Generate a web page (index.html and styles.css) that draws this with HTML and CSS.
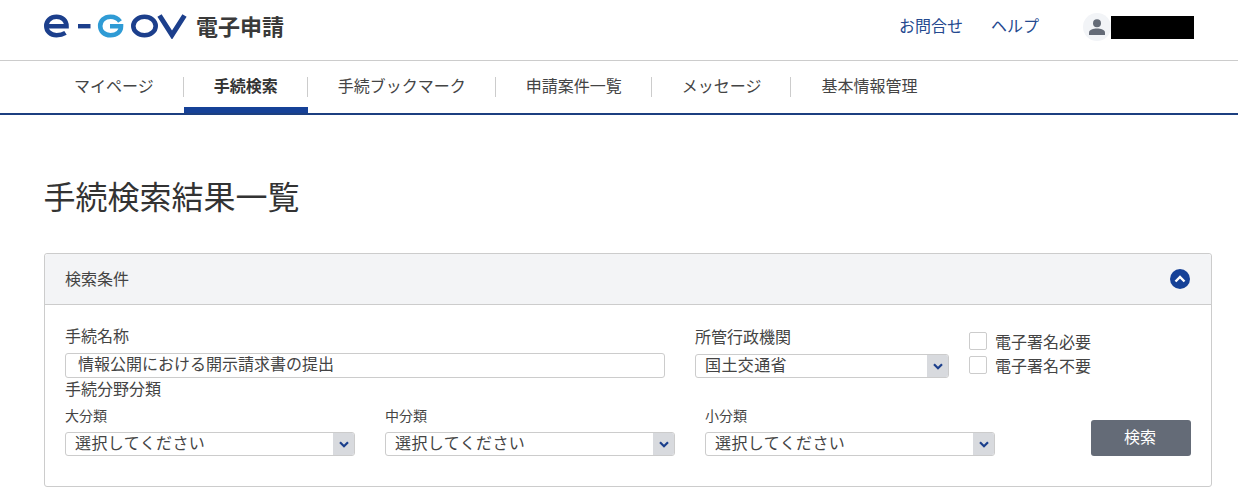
FILE: index.html
```html
<!DOCTYPE html>
<html lang="ja">
<head>
<meta charset="utf-8">
<title>手続検索結果一覧</title>
<link rel="stylesheet" href="styles.css">
</head>
<body>
<header class="topbar">
  <div class="brand">
    <svg class="logo" width="144" height="26" viewBox="0 0 144 26" aria-label="e-GOV">
      <path d="M3 13.200H22.500C22.500 7 18 3.800 12.500 3.800C6.500 3.800 2.300 7.800 2.300 13C2.300 18.200 6.500 22.200 12.500 22.200C16 22.200 19 21.400 21.500 19.900" fill="none" stroke="#1c3f8c" stroke-width="4.600"/>
      <rect x="34" y="11" width="12.500" height="4.400" fill="#1c3f8c"/>
      <path d="M76 8.500C74 5.500 70.500 3.800 66.500 3.800C60 3.800 56.200 8 56.200 13C56.200 18 60 22.200 66.500 22.200C73 22.200 77 18.500 77 13.300H66" fill="none" stroke="#2f9bd5" stroke-width="4.600"/>
      <ellipse cx="100.500" cy="13" rx="11.200" ry="9.200" fill="none" stroke="#1c3f8c" stroke-width="4.600"/>
      <path d="M115.500 2.500L128 22L140.500 2.500" fill="none" stroke="#1c3f8c" stroke-width="5"/>
    </svg>
    <span class="brand-name">電子申請</span>
  </div>
  <div class="utility">
    <a class="utility-link" href="#">お問合せ</a>
    <a class="utility-link" href="#">ヘルプ</a>
    <div class="user">
      <span class="avatar">
        <svg width="18" height="16" viewBox="0 0 18 16"><circle cx="9" cy="4.200" r="4" fill="#646b77"/><path d="M1 16V13.500C1 10.800 5.500 9.600 9 9.600C12.500 9.600 17 10.800 17 13.500V16Z" fill="#646b77"/></svg>
      </span>
      <span class="redacted"></span>
    </div>
  </div>
</header>

<nav class="mainnav">
  <a class="nav-item" href="#">マイページ</a>
  <a class="nav-item active" href="#">手続検索</a>
  <a class="nav-item" href="#">手続ブックマーク</a>
  <a class="nav-item" href="#">申請案件一覧</a>
  <a class="nav-item" href="#">メッセージ</a>
  <a class="nav-item last" href="#">基本情報管理</a>
</nav>

<main class="content">
  <h1 class="page-title">手続検索結果一覧</h1>
  <section class="card">
    <div class="card-head">
      <span class="card-title">検索条件</span>
      <span class="collapse">
        <svg width="12" height="8" viewBox="0 0 12 8"><path d="M1.500 6.500L6 2L10.500 6.500" fill="none" stroke="#fff" stroke-width="2.400"/></svg>
      </span>
    </div>
    <div class="card-body">
      <div class="row-top">
        <div class="col-name">
          <div class="label">手続名称</div>
          <div class="text-input">情報公開における開示請求書の提出</div>
        </div>
        <div class="col-agency">
          <div class="label">所管行政機関</div>
          <div class="select">
            <span class="select-value">国土交通省</span>
            <span class="select-arrow"><svg width="10" height="7" viewBox="0 0 10 7"><path d="M1 1.200L5 5.200L9 1.200" fill="none" stroke="#1c3f8c" stroke-width="2.200"/></svg></span>
          </div>
        </div>
        <div class="col-checks">
          <label class="check"><span class="box"></span>電子署名必要</label>
          <label class="check"><span class="box"></span>電子署名不要</label>
        </div>
      </div>
      <div class="label field-title">手続分野分類</div>
      <div class="row-bottom">
        <div class="col-cat">
          <div class="small-label">大分類</div>
          <div class="select">
            <span class="select-value">選択してください</span>
            <span class="select-arrow"><svg width="10" height="7" viewBox="0 0 10 7"><path d="M1 1.200L5 5.200L9 1.200" fill="none" stroke="#1c3f8c" stroke-width="2.200"/></svg></span>
          </div>
        </div>
        <div class="col-cat">
          <div class="small-label">中分類</div>
          <div class="select">
            <span class="select-value">選択してください</span>
            <span class="select-arrow"><svg width="10" height="7" viewBox="0 0 10 7"><path d="M1 1.200L5 5.200L9 1.200" fill="none" stroke="#1c3f8c" stroke-width="2.200"/></svg></span>
          </div>
        </div>
        <div class="col-cat">
          <div class="small-label">小分類</div>
          <div class="select">
            <span class="select-value">選択してください</span>
            <span class="select-arrow"><svg width="10" height="7" viewBox="0 0 10 7"><path d="M1 1.200L5 5.200L9 1.200" fill="none" stroke="#1c3f8c" stroke-width="2.200"/></svg></span>
          </div>
        </div>
        <button class="search-btn" type="button">検索</button>
      </div>
    </div>
  </section>
</main>
</body>
</html>
```

FILE: styles.css
```css
* { box-sizing: border-box; }

html, body { height: 100%; }

body {
  margin: 0;
  overflow: hidden;
  background: #fff;
  color: #333;
  font-family: "Noto Sans CJK JP", "Noto Sans", sans-serif;
  font-size: 16px;
}

a { text-decoration: none; color: inherit; }

.topbar {
  height: 61px;
  border-bottom: 1px solid #ccc;
  display: flex;
  justify-content: space-between;
  padding: 0 44px;
}

.brand { display: flex; align-items: flex-start; padding-top: 13px; }
.logo { display: block; }
.brand-name {
  margin-left: 8px;
  font-size: 22px;
  line-height: 24px;
  font-weight: 700;
  color: #3a3a3a;
}

.utility { display: flex; align-items: flex-start; padding: 13px 0 0; }
.utility-link { color: #24498f; font-size: 16px; line-height: 24px; margin-right: 28px; }
.utility-link:nth-child(2) { margin-right: 44px; }
.user { display: flex; align-items: flex-start; }
.avatar {
  width: 28px;
  height: 28px;
  border-radius: 50%;
  background: #f2f4f7;
  display: flex;
  align-items: center;
  justify-content: center;
}
.redacted { display: block; width: 83px; height: 23px; margin-top: 3px; background: #000; }

.mainnav {
  height: 54px;
  padding: 0 44px;
  border-bottom: 2px solid #1c3f80;
  display: flex;
  align-items: flex-start;
}
.nav-item {
  position: relative;
  height: 52px;
  padding: 0 30px;
  line-height: 48px;
  color: #444;
  white-space: nowrap;
}
.nav-item::after {
  content: "";
  position: absolute;
  right: 0;
  top: 16px;
  height: 20px;
  width: 1px;
  background: #ccc;
}
.nav-item.last::after { display: none; }
.nav-item.active { font-weight: 700; color: #333; border-bottom: 6px solid #164197; }

.content { padding: 0 26px 0 44px; }

.page-title {
  margin: 0;
  padding-top: 57px;
  font-size: 32px;
  line-height: 46px;
  font-weight: 400;
  color: #333;
  text-indent: -0.500px;
}

.card {
  margin-top: 35px;
  height: 234px;
  border: 1px solid #ccc;
  border-radius: 3px;
}
.card-head {
  height: 51px;
  background: #f3f4f6;
  border-bottom: 1px solid #ccc;
  border-radius: 3px 3px 0 0;
  padding: 0 21px 0 20px;
  display: flex;
  align-items: center;
  justify-content: space-between;
}
.card-title { font-size: 16px; line-height: 22px; color: #444; margin-top: -3px; }
.collapse {
  width: 20px;
  height: 20px;
  border-radius: 50%;
  background: #164197;
  display: flex;
  align-items: center;
  justify-content: center;
}

.card-body { padding: 20px 20px 0; }

.row-top { display: flex; height: 53px; }
.col-name { width: 600px; margin-right: 30px; }
.col-agency { width: 254px; margin-right: 20px; padding-top: 1px; }
.col-checks { display: flex; flex-direction: column; gap: 6px; padding-top: 7px; }

.label { font-size: 16px; line-height: 21px; height: 23px; color: #444; }
.text-input {
  width: 600px;
  height: 25px;
  margin-top: 5px;
  padding: 0 12px;
  border: 1px solid #ccc;
  border-radius: 3px;
  line-height: 19px;
  color: #444;
}

.check { display: flex; align-items: center; height: 18px; line-height: 14px; color: #444; }
.box {
  width: 18px;
  height: 18px;
  margin-right: 8px;
  border: 1px solid #ccc;
  border-radius: 2px;
  background: #fff;
}

.select {
  display: flex;
  height: 24px;
  margin-top: 5px;
  border: 1px solid #ccc;
  border-radius: 3px;
}
.select-value {
  flex: 1;
  padding-left: 9px;
  line-height: 18px;
  color: #444;
  letter-spacing: 0.400px;
}
.select-arrow {
  width: 21px;
  border-radius: 0 2px 2px 0;
  background: #d8dade;
  display: flex;
  align-items: center;
  justify-content: center;
}

.field-title { height: 23px; }

.row-bottom { display: flex; align-items: flex-start; margin-top: 5px; }
.col-cat { width: 290px; margin-right: 30px; }
.col-cat .select { margin-top: 6px; }
.small-label { font-size: 14px; line-height: 18px; height: 20px; color: #444; }

.search-btn {
  width: 100px;
  height: 36px;
  margin: 14px 0 0 66px;
  border: 0;
  border-radius: 3px;
  background: #646b77;
  color: #fff;
  font: 400 16px/30px "Noto Sans CJK JP", sans-serif;
  padding: 0 2px 5px 0;
}
```
